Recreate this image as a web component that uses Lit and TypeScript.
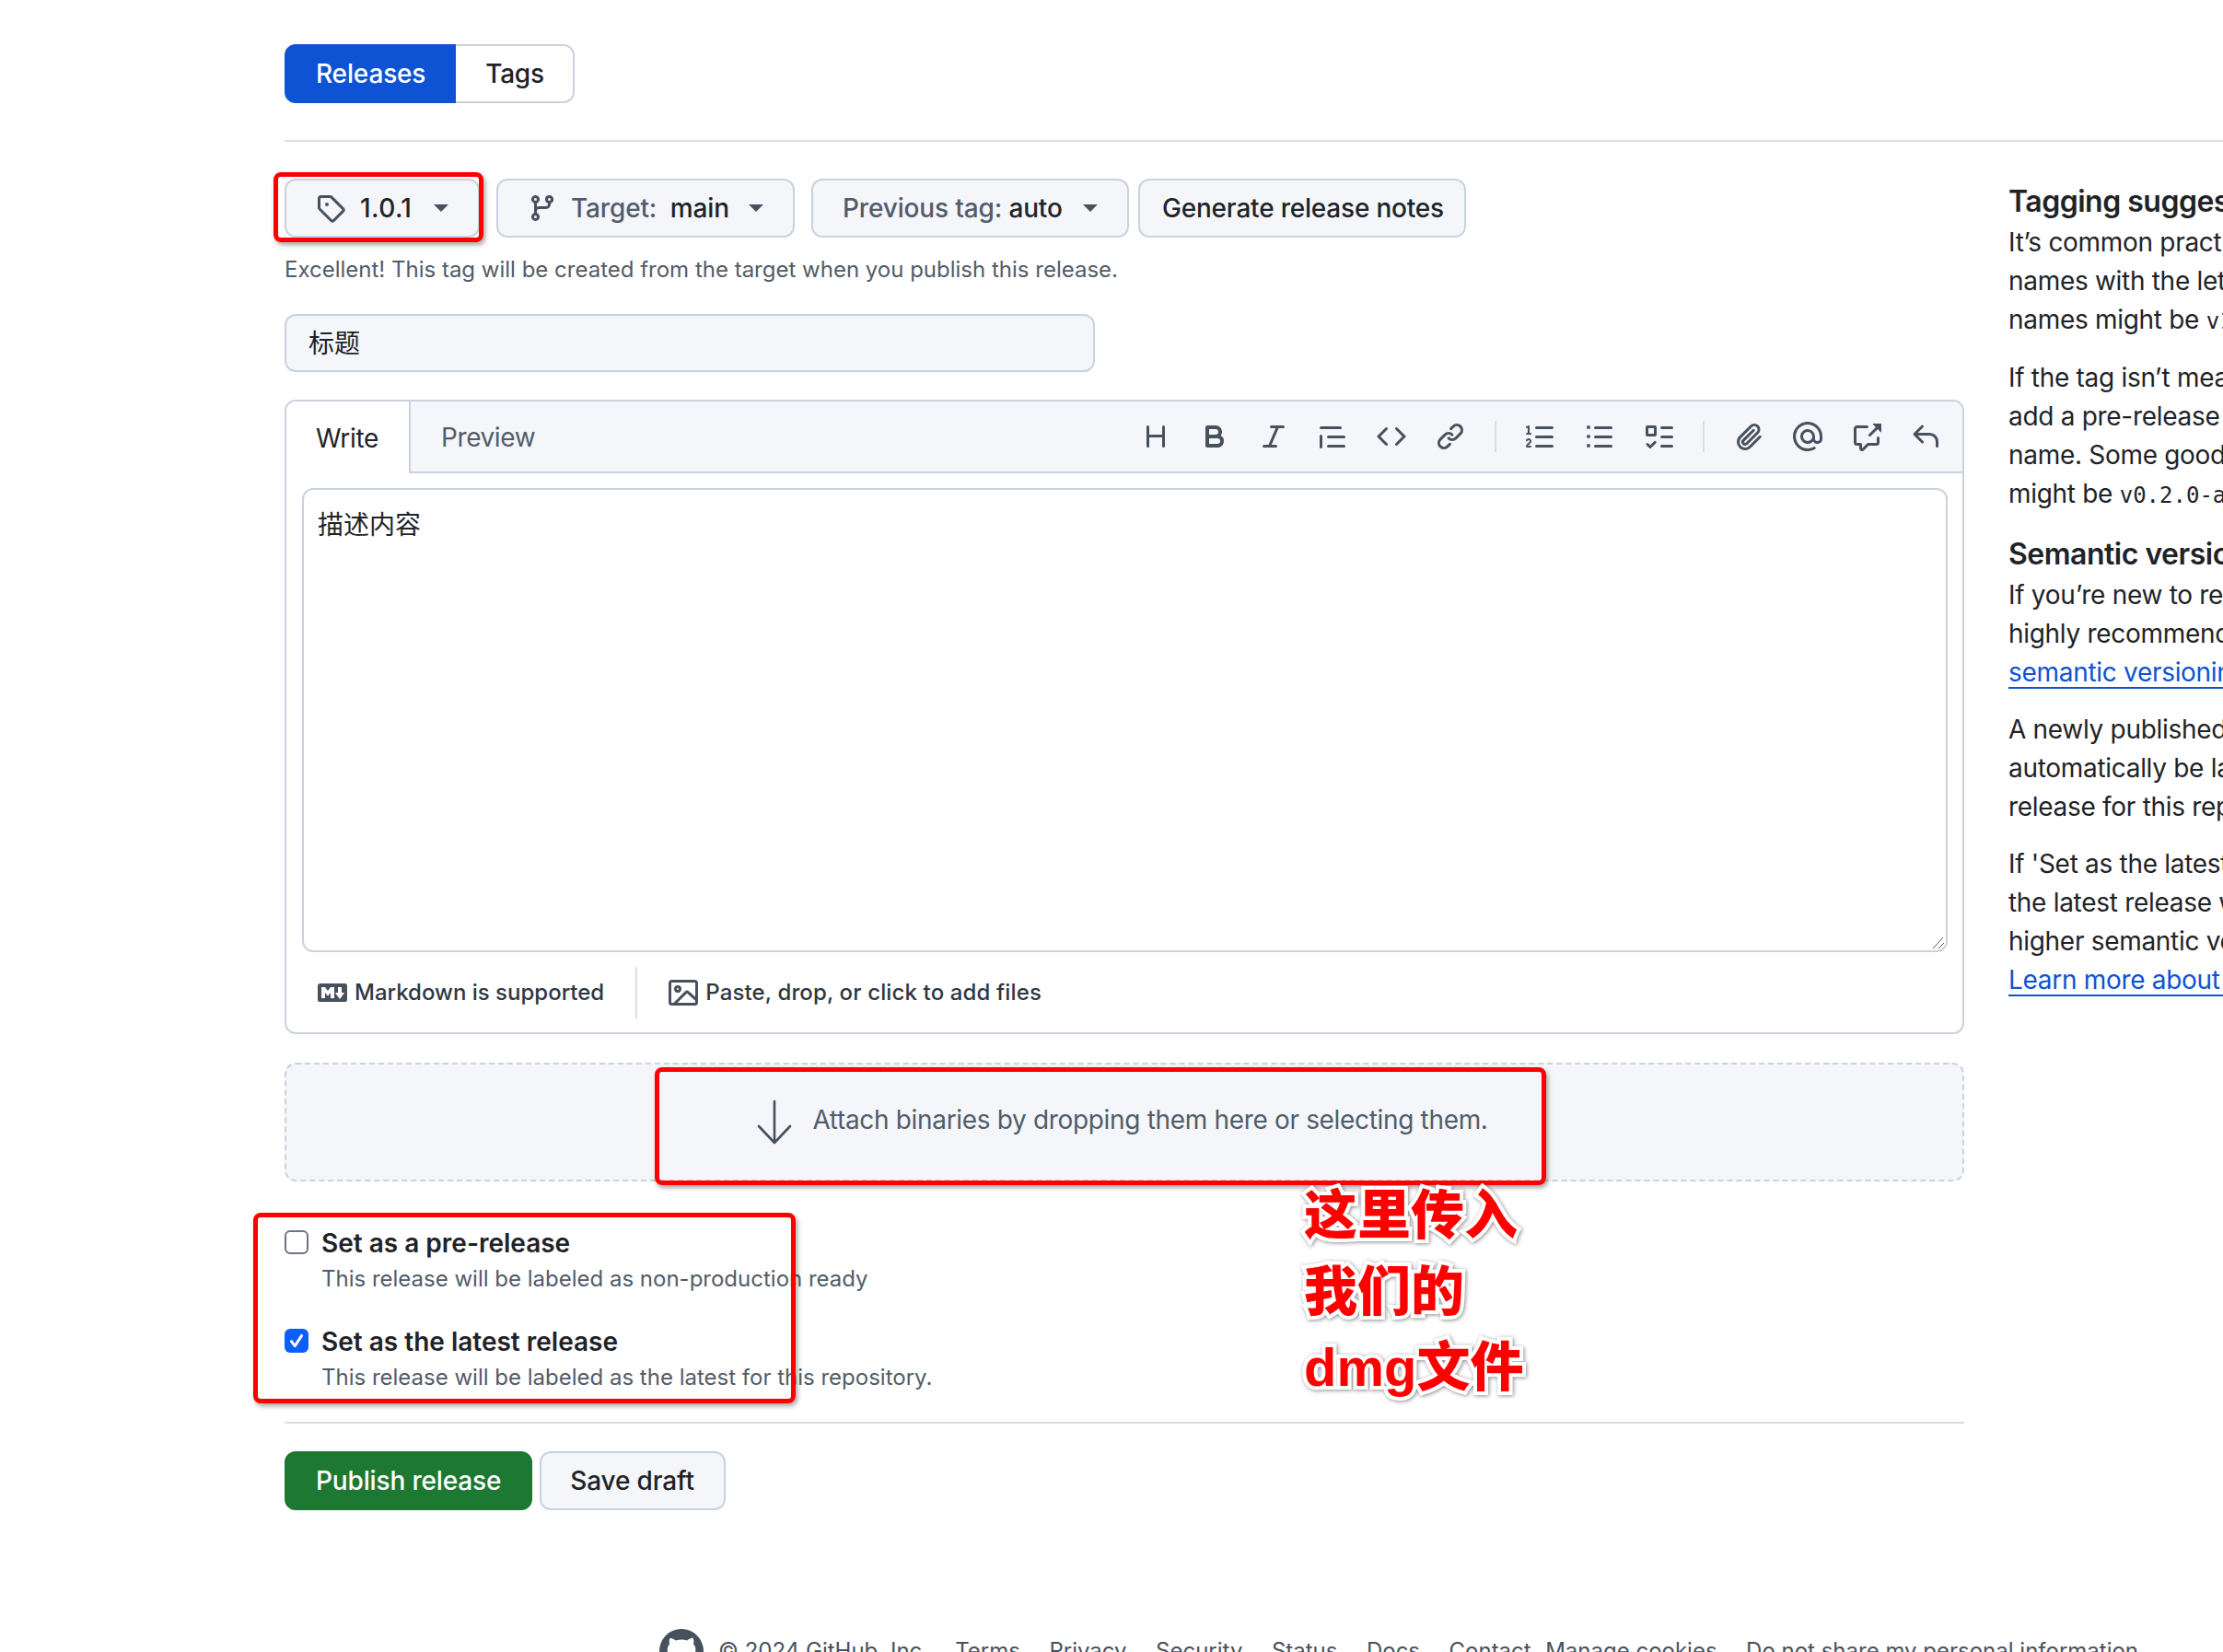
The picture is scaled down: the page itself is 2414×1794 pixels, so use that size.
import { LitElement, html, css, svg } from 'lit';
import { customElement } from 'lit/decorators.js';

// octicon paths, keyed by name
const ICONS: Record<string, string> = {
  tag: 'M1 7.775V2.75C1 1.784 1.784 1 2.75 1h5.025c.464 0 .91.184 1.238.513l6.25 6.25a1.75 1.75 0 0 1 0 2.474l-5.026 5.026a1.75 1.75 0 0 1-2.474 0l-6.25-6.25A1.752 1.752 0 0 1 1 7.775Zm1.5 0c0 .066.026.13.073.177l6.25 6.25a.25.25 0 0 0 .354 0l5.025-5.025a.25.25 0 0 0 0-.354l-6.25-6.25a.25.25 0 0 0-.177-.073H2.75a.25.25 0 0 0-.25.25ZM6 5a1 1 0 1 1 0 2 1 1 0 0 1 0-2Z',
  branch: 'M9.5 3.25a2.25 2.25 0 1 1 3 2.122V6A2.5 2.5 0 0 1 10 8.5H6a1 1 0 0 0-1 1v1.128a2.251 2.251 0 1 1-1.5 0V5.372a2.25 2.25 0 1 1 1.5 0v1.836A2.493 2.493 0 0 1 6 7h4a1 1 0 0 0 1-1v-.628A2.25 2.25 0 0 1 9.5 3.25Zm-6 0a.75.75 0 1 0 1.5 0 .75.75 0 0 0-1.5 0Zm8.25-.75a.75.75 0 1 0 0 1.5.75.75 0 0 0 0-1.5ZM4.25 12a.75.75 0 1 0 0 1.5.75.75 0 0 0 0-1.5Z',
  heading: 'M3.75 2a.75.75 0 0 1 .75.75V7h7V2.75a.75.75 0 0 1 1.5 0v10.5a.75.75 0 0 1-1.5 0V8.5h-7v4.75a.75.75 0 0 1-1.5 0V2.75A.75.75 0 0 1 3.75 2Z',
  bold: 'M4 2h4.5a3.501 3.501 0 0 1 2.852 5.53A3.499 3.499 0 0 1 9.5 14H4a1 1 0 0 1-1-1V3a1 1 0 0 1 1-1Zm1 7v3h4.5a1.5 1.5 0 0 0 0-3Zm3.5-2a1.5 1.5 0 0 0 0-3H5v3Z',
  italic: 'M6 2.75A.75.75 0 0 1 6.75 2h6.5a.75.75 0 0 1 0 1.5h-2.505l-3.858 9H9.25a.75.75 0 0 1 0 1.5h-6.5a.75.75 0 0 1 0-1.5h2.505l3.858-9H6.75A.75.75 0 0 1 6 2.75Z',
  quote: 'M1.75 2.5h10.5a.75.75 0 0 1 0 1.5H1.75a.75.75 0 0 1 0-1.5Zm4 5h8.5a.75.75 0 0 1 0 1.5h-8.5a.75.75 0 0 1 0-1.5Zm0 5h8.5a.75.75 0 0 1 0 1.5h-8.5a.75.75 0 0 1 0-1.5ZM2.5 7.75v6a.75.75 0 0 1-1.5 0v-6a.75.75 0 0 1 1.5 0Z',
  code: 'm11.28 3.22 4.25 4.25a.75.75 0 0 1 0 1.06l-4.25 4.25a.749.749 0 0 1-1.275-.326.749.749 0 0 1 .215-.734L13.94 8l-3.72-3.72a.749.749 0 0 1 .326-1.275.749.749 0 0 1 .734.215Zm-6.56 0a.751.751 0 0 1 1.042.018.751.751 0 0 1 .018 1.042L2.06 8l3.72 3.72a.749.749 0 0 1-.326 1.275.749.749 0 0 1-.734-.215L.47 8.53a.75.75 0 0 1 0-1.06Z',
  link: 'm7.775 3.275 1.25-1.25a3.5 3.5 0 1 1 4.95 4.95l-2.5 2.5a3.5 3.5 0 0 1-4.95 0 .751.751 0 0 1 .018-1.042.751.751 0 0 1 1.042-.018 1.998 1.998 0 0 0 2.83 0l2.5-2.5a2.002 2.002 0 0 0-2.83-2.83l-1.25 1.25a.751.751 0 0 1-1.042-.018.751.751 0 0 1-.018-1.042Zm-4.69 9.64a1.998 1.998 0 0 0 2.83 0l1.25-1.25a.751.751 0 0 1 1.042.018.751.751 0 0 1 .018 1.042l-1.25 1.25a3.5 3.5 0 1 1-4.95-4.95l2.5-2.5a3.5 3.5 0 0 1 4.95 0 .751.751 0 0 1-.018 1.042.751.751 0 0 1-1.042.018 1.998 1.998 0 0 0-2.83 0l-2.5 2.5a1.998 1.998 0 0 0 0 2.83Z',
  ol: 'M5 3.25a.75.75 0 0 1 .75-.75h8.5a.75.75 0 0 1 0 1.5h-8.5A.75.75 0 0 1 5 3.25Zm0 5a.75.75 0 0 1 .75-.75h8.5a.75.75 0 0 1 0 1.5h-8.5A.75.75 0 0 1 5 8.25Zm0 5a.75.75 0 0 1 .75-.75h8.5a.75.75 0 0 1 0 1.5h-8.5a.75.75 0 0 1-.75-.75ZM.924 10.32a.5.5 0 0 1-.851-.525l.001-.001.001-.002.002-.004.007-.011c.097-.144.215-.273.348-.384.228-.19.588-.392 1.068-.392.468 0 .858.181 1.126.484.259.294.377.673.377 1.038 0 .987-.686 1.495-1.156 1.845l-.047.035c-.303.225-.522.4-.654.597h1.357a.5.5 0 0 1 0 1H.5a.5.5 0 0 1-.5-.5c0-1.005.692-1.52 1.167-1.875l.035-.025c.531-.396.8-.625.8-1.078a.57.57 0 0 0-.128-.376C1.806 10.068 1.695 10 1.5 10a.658.658 0 0 0-.429.163.835.835 0 0 0-.144.153ZM2.003 2.5V6h.503a.5.5 0 0 1 0 1H.5a.5.5 0 0 1 0-1h.503V3.308l-.28.14a.5.5 0 0 1-.446-.895l1.003-.5a.5.5 0 0 1 .723.447Z',
  ul: 'M5.75 2.5h8.5a.75.75 0 0 1 0 1.5h-8.5a.75.75 0 0 1 0-1.5Zm0 5h8.5a.75.75 0 0 1 0 1.5h-8.5a.75.75 0 0 1 0-1.5Zm0 5h8.5a.75.75 0 0 1 0 1.5h-8.5a.75.75 0 0 1 0-1.5ZM2 14a1 1 0 1 1 0-2 1 1 0 0 1 0 2Zm1-6a1 1 0 1 1-2 0 1 1 0 0 1 2 0ZM2 4a1 1 0 1 1 0-2 1 1 0 0 1 0 2Z',
  tasklist: 'M2 2h4a1 1 0 0 1 1 1v4a1 1 0 0 1-1 1H2a1 1 0 0 1-1-1V3a1 1 0 0 1 1-1Zm4.655 8.595a.75.75 0 0 1 0 1.06L4.03 14.28a.75.75 0 0 1-1.06 0l-1.5-1.5a.749.749 0 0 1 .326-1.275.749.749 0 0 1 .734.215l.97.97 2.095-2.095a.75.75 0 0 1 1.06 0ZM9.75 2.5h5.5a.75.75 0 0 1 0 1.5h-5.5a.75.75 0 0 1 0-1.5Zm0 5h5.5a.75.75 0 0 1 0 1.5h-5.5a.75.75 0 0 1 0-1.5Zm0 5h5.5a.75.75 0 0 1 0 1.5h-5.5a.75.75 0 0 1 0-1.5Zm-7.25-9v3h3v-3Z',
  paperclip: 'M12.212 3.02a1.753 1.753 0 0 0-2.478.003l-5.83 5.83a3.007 3.007 0 0 0-.88 2.127c0 .795.315 1.551.88 2.116.567.567 1.333.89 2.126.89.79 0 1.548-.321 2.116-.89l5.48-5.48a.75.75 0 0 1 1.061 1.06l-5.48 5.48a4.492 4.492 0 0 1-3.177 1.33c-1.2 0-2.345-.487-3.187-1.33a4.483 4.483 0 0 1-1.32-3.177c0-1.195.475-2.341 1.32-3.186l5.83-5.83a3.25 3.25 0 0 1 5.553 2.297c0 .863-.343 1.691-.953 2.301L7.439 12.39c-.375.377-.884.59-1.416.593a1.998 1.998 0 0 1-1.412-.593 1.992 1.992 0 0 1 0-2.828l5.48-5.48a.751.751 0 0 1 1.042.018.751.751 0 0 1 .018 1.042l-5.48 5.48a.492.492 0 0 0 0 .707.499.499 0 0 0 .707 0l5.833-5.833a1.755 1.755 0 0 0 0-2.474Z',
  mention: 'M4.75 2.37a6.501 6.501 0 0 0 6.5 11.26.75.75 0 0 1 .75 1.298A7.999 7.999 0 0 1 .989 4.148 8 8 0 0 1 16 7.75v1.5a2.75 2.75 0 0 1-5.072 1.475 3.999 3.999 0 0 1-6.65-4.19A4 4 0 0 1 12 8v1.25a1.25 1.25 0 0 0 2.5 0V7.867a6.5 6.5 0 0 0-9.75-5.496ZM10.5 8a2.5 2.5 0 1 0-5 0 2.5 2.5 0 0 0 5 0Z',
  xref: 'M2.75 3.5a.25.25 0 0 0-.25.25v7.5c0 .138.112.25.25.25h2a.75.75 0 0 1 .75.75v2.19l2.72-2.72a.749.749 0 0 1 .53-.22h4.5a.25.25 0 0 0 .25-.25v-2.5a.75.75 0 0 1 1.5 0v2.5A1.75 1.75 0 0 1 13.25 13H9.06l-2.573 2.573A1.458 1.458 0 0 1 4 14.543V13H2.75A1.75 1.75 0 0 1 1 11.25v-7.5C1 2.784 1.784 2 2.75 2h5.5a.75.75 0 0 1 0 1.5ZM16 1.25v4.146a.25.25 0 0 1-.427.177L14.03 4.03l-3.75 3.75a.749.749 0 0 1-1.275-.326.749.749 0 0 1 .215-.734l3.75-3.75-1.543-1.543A.25.25 0 0 1 11.604 1h4.146a.25.25 0 0 1 .25.25Z',
  reply: 'M6.78 1.97a.75.75 0 0 1 0 1.06L3.81 6h6.44A4.75 4.75 0 0 1 15 10.75v2.5a.75.75 0 0 1-1.5 0v-2.5a3.25 3.25 0 0 0-3.25-3.25H3.81l2.97 2.97a.749.749 0 0 1-.326 1.275.749.749 0 0 1-.734-.215L1.47 7.28a.75.75 0 0 1 0-1.06l4.25-4.25a.75.75 0 0 1 1.06 0Z',
  markdown: 'M14.85 3c.63 0 1.15.52 1.14 1.15v7.7c0 .63-.51 1.15-1.15 1.15H1.15C.52 13 0 12.48 0 11.84V4.15C0 3.52.52 3 1.15 3ZM9 11V5H7L5.5 7 4 5H2v6h2V8l1.5 1.92L7 8v3Zm2.99.5L14.5 8H13V5h-2v3H9.5Z',
  image: 'M16 13.25A1.75 1.75 0 0 1 14.25 15H1.75A1.75 1.75 0 0 1 0 13.25V2.75C0 1.784.784 1 1.75 1h12.5c.966 0 1.75.784 1.75 1.75ZM1.75 2.5a.25.25 0 0 0-.25.25v10.5c0 .138.112.25.25.25h.94l.03-.03 6.077-6.078a1.75 1.75 0 0 1 2.412-.06L14.5 10.31V2.75a.25.25 0 0 0-.25-.25Zm12.5 11a.25.25 0 0 0 .25-.25v-.917l-4.298-3.889a.25.25 0 0 0-.344.009L4.81 13.5ZM7 6a2 2 0 1 1-3.999.001A2 2 0 0 1 7 6ZM5.5 6a.5.5 0 1 0-1 0 .5.5 0 0 0 1 0Z',
  github: 'M8 0c4.42 0 8 3.58 8 8a8.013 8.013 0 0 1-5.45 7.59c-.4.08-.55-.17-.55-.38 0-.27.01-1.13.01-2.2 0-.75-.25-1.23-.54-1.48 1.78-.2 3.65-.88 3.65-3.95 0-.88-.31-1.59-.82-2.15.08-.2.36-1.02-.08-2.12 0 0-.67-.22-2.2.82-.64-.18-1.32-.27-2-.27-.68 0-1.36.09-2 .27-1.53-1.03-2.2-.82-2.2-.82-.44 1.1-.16 1.92-.08 2.12-.51.56-.82 1.28-.82 2.15 0 3.06 1.86 3.75 3.64 3.95-.23.2-.44.55-.51 1.07-.46.21-1.61.55-2.33-.66-.15-.24-.6-.83-1.23-.82-.67.01-.27.38.01.53.34.19.73.9.82 1.13.16.45.68 1.31 2.69.94 0 .67.01 1.3.01 1.49 0 .21-.15.45-.55.38A7.995 7.995 0 0 1 0 8c0-4.42 3.58-8 8-8Z',
};

const TOOLBAR = ['heading', 'bold', 'italic', 'quote', 'code', 'link', '|', 'ol', 'ul', 'tasklist', '|', 'paperclip', 'mention', 'xref', 'reply'];

const FOOTER_LINKS = ['Terms', 'Privacy', 'Security', 'Status', 'Docs', 'Contact', 'Manage cookies', 'Do not share my personal information'];

function icon(name: string, size = 32) {
  return html`<svg class="icon" width=${size} height=${size} viewBox="0 0 16 16" fill="currentColor">${svg`<path d=${ICONS[name]}></path>`}</svg>`;
}

@customElement('app-root')
export class AppRoot extends LitElement {
  static override styles = css`
    :host {
      display: block;
      position: relative;
      width: 2414px;
      height: 1794px;
      overflow: hidden;
      background: #fff;
      color: #1f2328;
      font-family: Inter, 'Noto Sans CJK SC', sans-serif;
      font-size: 28px;
      line-height: 42px;
    }

    .icon {
      flex: none;
      display: block;
    }

    .page {
      padding: 48px 0 0 309px;
    }

    .segmented {
      display: flex;
      height: 64px;
      width: max-content;
    }

    .seg {
      display: flex;
      align-items: center;
      font-weight: 500;
      letter-spacing: -0.15px;
    }

    .seg.on {
      background: #0e53d3;
      color: #fff;
      padding: 0 33px 0 34px;
      border-radius: 12px 0 0 12px;
    }

    .seg.off {
      padding: 0 31px 0 32px;
      border: 2px solid #c9d2de;
      border-left: none;
      border-radius: 0 12px 12px 0;
      letter-spacing: -0.3px;
    }

    .rule {
      height: 2px;
      background: #d8dee8;
      margin-top: 40px;
    }

    .columns {
      display: grid;
      grid-template-columns: 1824px 560px;
      column-gap: 48px;
      margin-top: 40px;
    }

    .controls {
      display: flex;
      gap: 18px;
    }

    .btn {
      box-sizing: border-box;
      display: flex;
      align-items: center;
      height: 64px;
      padding: 0 32px;
      gap: 16px;
      background: #f4f6fa;
      border: 2px solid #c9d2de;
      border-radius: 12px;
      font-weight: 500;
      white-space: nowrap;
      color: #1f2328;
      letter-spacing: -0.15px;
    }

    .btn .icon {
      color: #47515e;
    }

    .muted {
      color: #525c69;
    }

    .caret {
      flex: none;
      width: 0;
      height: 0;
      margin-left: auto;
      border-top: 8px solid #47515e;
      border-left: 8px solid transparent;
      border-right: 8px solid transparent;
    }

    .w-tag {
      width: 212px;
      letter-spacing: 0.4px;
    }

    .w-target {
      width: 324px;
      gap: 15px;
    }

    .w-prev {
      width: 345px;
    }

    .generate {
      width: 356px;
      margin-left: -8px;
      padding: 0 24px;
      letter-spacing: -0.2px;
    }

    .hint {
      margin-top: 17px;
      font-size: 24px;
      line-height: 36px;
      color: #525c69;
    }

    .title {
      box-sizing: border-box;
      display: flex;
      align-items: center;
      width: 880px;
      height: 63px;
      margin-top: 30px;
      padding: 0 24px;
      background: #f4f6fa;
      border: 2px solid #c9d2de;
      border-radius: 12px;
    }

    .editor {
      box-sizing: border-box;
      height: 689px;
      margin-top: 30px;
      border: 2px solid #c9d2de;
      border-radius: 12px;
      display: flex;
      flex-direction: column;
    }

    .editor-head {
      display: flex;
      align-items: stretch;
      height: 78px;
      flex: none;
      box-sizing: border-box;
      background: #f4f6fa;
      border-bottom: 2px solid #c9d2de;
      border-radius: 10px 10px 0 0;
    }

    .tab {
      display: flex;
      align-items: center;
      padding: 2px 32px 0;
      letter-spacing: -0.3px;
    }

    .tab.active {
      box-sizing: border-box;
      background: #fff;
      width: 135px;
      height: 78px;
      border-right: 2px solid #c9d2de;
      border-radius: 10px 0 0 0;
    }

    .tab.idle {
      color: #525c69;
      padding-left: 33px;
      letter-spacing: -0.4px;
    }

    .toolbar {
      margin-left: auto;
      display: flex;
      align-items: center;
      gap: 32px;
      padding-right: 24.5px;
      color: #47515e;
    }

    .sep {
      width: 2px;
      height: 34px;
      background: #d8dee8;
    }

    .textarea {
      position: relative;
      box-sizing: border-box;
      flex: none;
      height: 504px;
      margin: 16px 16px 0 17px;
      padding: 17px 15px;
      border: 2px solid #c9d2de;
      border-radius: 12px;
    }

    .grip {
      position: absolute;
      right: 0;
      bottom: 0;
    }

    .editor-foot {
      flex: 1;
      display: flex;
      align-items: center;
      padding: 0 0 0 34px;
      font-size: 24px;
      font-weight: 500;
      color: #2f3742;
    }

    .foot-item {
      display: flex;
      align-items: center;
      gap: 8px;
      color: #47515e;
    }

    .foot-item span {
      color: #2f3742;
    }

    .foot-item.paste span {
      letter-spacing: 0.13px;
    }

    .foot-sep {
      width: 2px;
      height: 56px;
      background: #d8dee8;
      margin: 0 34px;
    }

    .drop {
      box-sizing: border-box;
      display: flex;
      align-items: center;
      justify-content: center;
      gap: 22px;
      height: 129px;
      margin-top: 31px;
      background: #f4f6fa;
      border: 2px dashed #c9d2de;
      border-radius: 12px;
      color: #525c69;
    }

    .drop span {
      letter-spacing: -0.33px;
      margin: 0 4px 6px 0;
    }

    .options {
      margin-top: 46px;
      display: flex;
      flex-direction: column;
      gap: 29px;
    }

    .option {
      display: grid;
      grid-template-columns: 26px 1fr;
      column-gap: 14px;
    }

    .box {
      box-sizing: border-box;
      width: 26px;
      height: 26px;
      margin-top: 7px;
      border: 2px solid #6b7480;
      border-radius: 6px;
      background: #fff;
    }

    .box.checked {
      border: none;
      background: #0d5ffb;
      display: flex;
      align-items: center;
      justify-content: center;
    }

    .opt-label {
      font-weight: 600;
    }

    .opt-desc {
      grid-column: 2;
      font-size: 24px;
      line-height: 36px;
      color: #525c69;
    }

    .rule2 {
      height: 2px;
      background: #d8dee8;
      margin-top: 30px;
    }

    .actions {
      display: flex;
      gap: 8px;
      margin-top: 30px;
    }

    .publish {
      background: #1d7832;
      border-color: #1d7832;
      color: #fff;
    }

    .save {
      padding: 0 32px 0 31px;
    }

    .side {
      margin-top: 5px;
    }

    .side h4 {
      margin: 0 0 3px;
      font-size: 32px;
      line-height: 40px;
      font-weight: 600;
      letter-spacing: -0.5px;
      white-space: nowrap;
    }

    .side .second {
      margin-top: 25px;
    }

    .side p {
      margin: 0 0 20px;
      white-space: nowrap;
      letter-spacing: -0.3px;
    }

    .side p.lead {
      margin-bottom: 21px;
    }

    .side code {
      font-family: 'DejaVu Sans Mono', monospace;
      font-size: 24px;
      line-height: 1;
      letter-spacing: 0;
    }

    .side a {
      color: #0e53d3;
      text-decoration: underline;
      text-underline-offset: 6px;
    }

    .footer {
      display: flex;
      align-items: center;
      height: 48px;
      margin: 129px 0 0 407px;
      font-size: 24px;
      line-height: 36px;
      color: #47515e;
      white-space: nowrap;
    }

    .footer .logo {
      margin-right: 16px;
    }

    .footer .links {
      display: flex;
      gap: 31.5px;
      margin-left: 29px;
    }

    .footer .links .tight {
      margin-right: -16px;
    }

    /* red annotations drawn on top of the screenshot */
    .mark {
      position: absolute;
      box-sizing: border-box;
      border: 5px solid #fe0000;
      border-radius: 8px;
      box-shadow: 2px 3px 5px rgba(0, 0, 0, 0.35);
    }

    .mark.tag {
      left: 297px;
      top: 187px;
      width: 228px;
      height: 76px;
    }

    .mark.drop-mark {
      left: 711px;
      top: 1159px;
      width: 968px;
      height: 128px;
    }

    .mark.opts {
      left: 275px;
      top: 1317px;
      width: 589px;
      height: 207px;
    }

    .note {
      position: absolute;
      left: 1416px;
      top: 1279px;
      font-family: 'Liberation Sans', 'Noto Sans CJK SC', sans-serif;
      font-size: 58px;
      line-height: 82.5px;
      font-weight: 900;
      color: #fe0000;
      -webkit-text-stroke: 8px #fff;
      paint-order: stroke fill;
      filter: drop-shadow(1px 1px 2px rgba(0, 0, 0, 0.45));
      white-space: nowrap;
    }
  `;

  private renderSidebar() {
    return html`
      <aside class="side">
        <h4>Tagging suggestions</h4>
        <p class="lead">
          It’s common practice to prefix your version<br />
          names with the letter <code>v</code>. Some good tag<br />
          names might be <code>v1.0.0</code> or <code>v2.3.4</code>.
        </p>
        <p>
          If the tag isn’t meant for production use,<br />
          add a pre-release version after the version<br />
          name. Some good pre-release versions<br />
          might be <code>v0.2.0-alpha</code> or <code>v5.9-beta.3</code>.
        </p>
        <h4 class="second">Semantic versioning</h4>
        <p>
          If you’re new to releasing software, we<br />
          highly recommend to learn more about<br />
          <a>semantic versioning.</a>
        </p>
        <p>
          A newly published release will<br />
          automatically be labeled as the latest<br />
          release for this repository.
        </p>
        <p>
          If 'Set as the latest release' is unchecked,<br />
          the latest release will be determined by<br />
          higher semantic version.<br />
          <a>Learn more about release versions.</a>
        </p>
      </aside>
    `;
  }

  private renderEditor() {
    return html`
      <div class="editor">
        <div class="editor-head">
          <div class="tab active">Write</div>
          <div class="tab idle">Preview</div>
          <div class="toolbar">
            ${TOOLBAR.map((name) => (name === '|' ? html`<div class="sep"></div>` : icon(name)))}
          </div>
        </div>
        <div class="textarea">
          描述内容
          <svg class="grip" width="16" height="16" viewBox="0 0 16 16" fill="none" stroke="#555" stroke-width="1">
            <path d="M2 14 L13 2 M8 14 L14 8"></path>
          </svg>
        </div>
        <div class="editor-foot">
          <div class="foot-item">${icon('markdown')}<span>Markdown is supported</span></div>
          <div class="foot-sep"></div>
          <div class="foot-item paste">${icon('image')}<span>Paste, drop, or click to add files</span></div>
        </div>
      </div>
    `;
  }

  override render() {
    return html`
      <div class="page">
        <div class="segmented">
          <div class="seg on">Releases</div>
          <div class="seg off">Tags</div>
        </div>
        <div class="rule"></div>
        <div class="columns">
          <main>
            <div class="controls">
              <div class="btn w-tag">${icon('tag')}<span>1.0.1</span><i class="caret"></i></div>
              <div class="btn w-target">
                ${icon('branch')}
                <span><span class="muted">Target:</span>&nbsp; main</span>
                <i class="caret"></i>
              </div>
              <div class="btn w-prev"><span><span class="muted">Previous tag:</span> auto</span><i class="caret"></i></div>
              <div class="btn generate">Generate release notes</div>
            </div>
            <div class="hint">Excellent! This tag will be created from the target when you publish this release.</div>
            <div class="title">标题</div>
            ${this.renderEditor()}
            <div class="drop">
              <svg width="38" height="50" viewBox="0 0 38 50" fill="none" stroke="#47515e" stroke-width="2.6" stroke-linecap="round" stroke-linejoin="round">
                <path d="M19 2 V47 M2 29 L19 47 L36 29"></path>
              </svg>
              <span>Attach binaries by dropping them here or selecting them.</span>
            </div>
            <div class="options">
              <div class="option">
                <div class="box"></div>
                <div class="opt-label">Set as a pre-release</div>
                <div class="opt-desc">This release will be labeled as non-production ready</div>
              </div>
              <div class="option">
                <div class="box checked">
                  <svg width="18" height="18" viewBox="0 0 16 16" fill="none" stroke="#fff" stroke-width="2.6" stroke-linecap="round" stroke-linejoin="round">
                    <path d="M3 8.5 L6.5 13 L13 3"></path>
                  </svg>
                </div>
                <div class="opt-label">Set as the latest release</div>
                <div class="opt-desc">This release will be labeled as the latest for this repository.</div>
              </div>
            </div>
            <div class="rule2"></div>
            <div class="actions">
              <div class="btn publish">Publish release</div>
              <div class="btn save">Save draft</div>
            </div>
            <div class="footer">
              <span class="logo">${icon('github', 48)}</span>
              <span>© 2024 GitHub, Inc.</span>
              <div class="links">
                ${FOOTER_LINKS.map((l) => html`<span class=${l === 'Contact' ? 'tight' : ''}>${l}</span>`)}
              </div>
            </div>
          </main>
          ${this.renderSidebar()}
        </div>
      </div>
      <div class="mark tag"></div>
      <div class="mark drop-mark"></div>
      <div class="mark opts"></div>
      <div class="note">这里传入<br />我们的<br />dmg文件</div>
    `;
  }
}
